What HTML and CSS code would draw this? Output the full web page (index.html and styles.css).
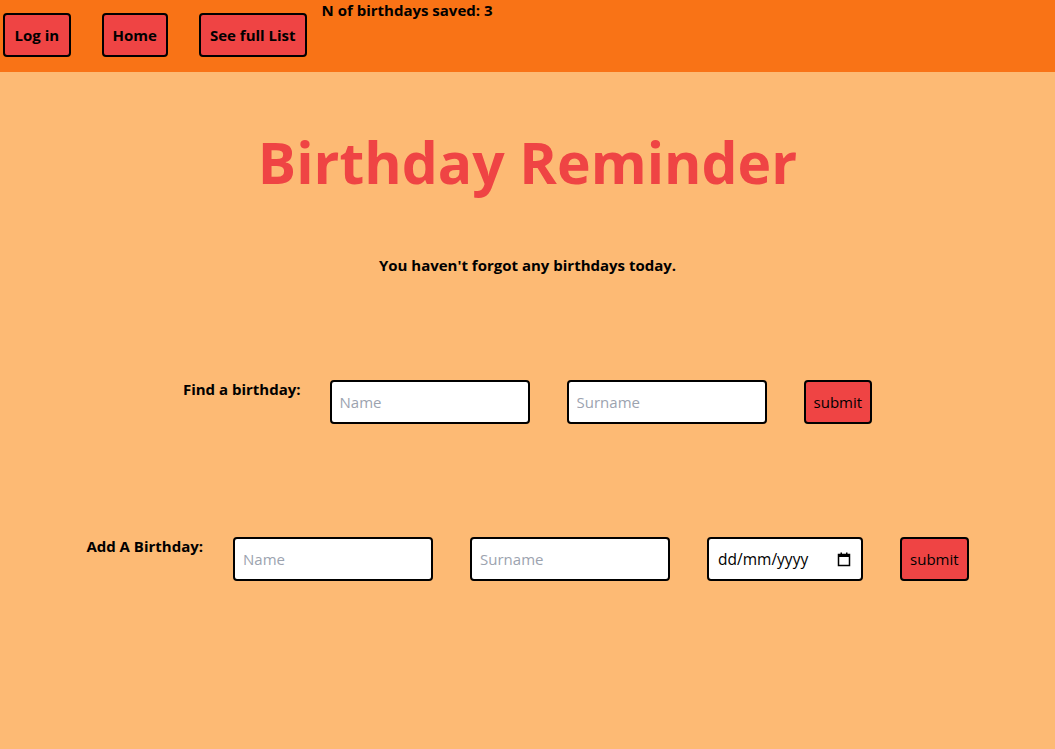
FILE: index.html
```html
<!DOCTYPE html>
<html lang="en">
<head>
<meta charset="utf-8">
<title>Birthday Reminder</title>
<link rel="stylesheet" href="styles.css">
</head>
<body>
<header class="topbar">
  <nav class="nav">
    <button class="nav-btn">Log in</button>
    <button class="nav-btn">Home</button>
    <button class="nav-btn">See full List</button>
  </nav>
  <p class="count">N of birthdays saved: 3</p>
</header>
<main class="main">
  <h1 class="title">Birthday Reminder</h1>
  <p class="status">You haven't forgot any birthdays today.</p>
  <form class="row row-find">
    <label class="row-label">Find a birthday:</label>
    <input class="field" type="text" placeholder="Name">
    <input class="field" type="text" placeholder="Surname">
    <button class="submit" type="button">submit</button>
  </form>
  <form class="row row-add">
    <label class="row-label">Add A Birthday:</label>
    <input class="field" type="text" placeholder="Name">
    <input class="field" type="text" placeholder="Surname">
    <div class="field date-field">
      <span class="date-text">dd/mm/yyyy</span>
      <svg class="cal" width="14" height="15" viewBox="0 0 14 15"><rect x="1.5" y="2.5" width="11" height="11" fill="none" stroke="#000" stroke-width="1.5"/><rect x="1" y="2" width="12" height="3" fill="#000"/><rect x="3.5" y="0.5" width="1.5" height="2.5" fill="#000"/><rect x="9" y="0.5" width="1.5" height="2.5" fill="#000"/></svg>
    </div>
    <button class="submit" type="button">submit</button>
  </form>
</main>
</body>
</html>
```
FILE: styles.css
```css
* { box-sizing: border-box; }
html, body { margin: 0; padding: 0; }
body {
  font-family: "Open Sans", "Noto Sans", sans-serif;
  background: #fdba74;
  color: #000;
  min-height: 749px;
}
.topbar {
  background: #f97316;
  height: 72px;
  display: flex;
  align-items: flex-start;
}
.nav {
  display: flex;
  gap: 31px;
  margin: 13px 0 0 3px;
}
.nav-btn {
  font-family: inherit;
  font-weight: 700;
  font-size: 15px;
  height: 44px;
  padding: 0 9px;
  background: #ef4444;
  border: 2px solid #000;
  border-radius: 4px;
  color: #000;
}
.nav-btn:first-child { padding: 0 9.5px; }
.count {
  margin: 0 0 0 15px;
  font-weight: 700;
  font-size: 15px;
  line-height: 20px;
}
.main {
  display: flex;
  flex-direction: column;
  align-items: center;
}
.title {
  margin: 60px 0 0;
  font-size: 57px;
  line-height: 60px;
  font-weight: 700;
  color: #ef4444;
}
.status {
  margin: 63px 0 0;
  font-size: 15px;
  font-weight: 700;
  line-height: 20px;
}
.row {
  display: flex;
  align-items: flex-start;
  margin: 0;
}
.row-find { margin-top: 105px; }
.row-add { margin-top: 113px; }
.row-label {
  font-weight: 700;
  font-size: 15px;
  line-height: 18px;
  margin-right: 29px;
}
.row-add .row-label { margin-right: 30px; }
.field {
  width: 200px;
  height: 44px;
  border: 2px solid #000;
  border-radius: 4px;
  background: #fff;
  padding: 0 8px;
  font-family: inherit;
  font-size: 15px;
  margin-right: 37px;
}
.field::placeholder { color: #9ca3af; }
.date-field {
  width: 156px;
  display: flex;
  align-items: center;
  justify-content: space-between;
  padding: 0 10px 0 9px;
}
.date-text { font-size: 15.5px; }
.cal { display: block; }
.submit {
  font-family: inherit;
  font-size: 15px;
  height: 44px;
  padding: 0 8px;
  background: #ef4444;
  border: 2px solid #000;
  border-radius: 4px;
  color: #000;
}
```
